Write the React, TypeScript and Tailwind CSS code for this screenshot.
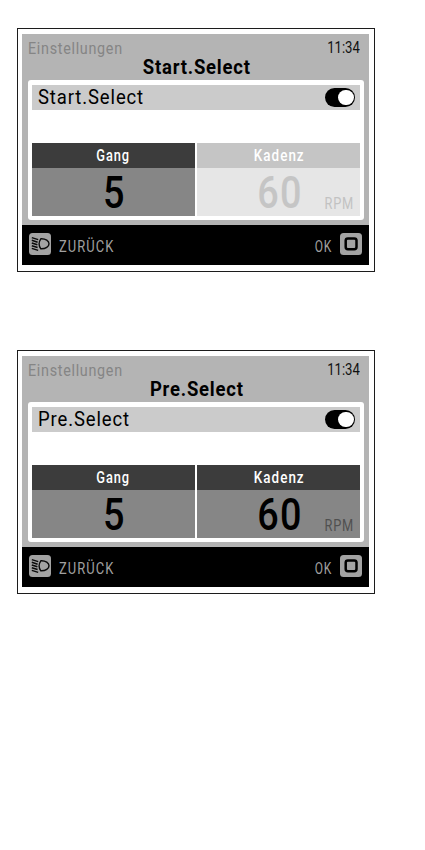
interface ScreenProps {
  title: string
  gear: string
  cadence: string
  cadenceActive: boolean
}

function LightIcon() {
  return (
    <svg width="22" height="22" viewBox="0 0 22 22" fill="none" stroke="#0a0a0a">
      <rect width="22" height="22" rx="3.5" fill="#a3a3a3" stroke="none" />
      <path
        d="M11.8 5.8C9.8 8.8 9.8 12.9 11.8 15.8C16.8 16 20 13.6 20 10.8C20 8 16.8 5.6 11.8 5.8Z"
        strokeWidth="1.4"
        strokeLinejoin="round"
      />
      <path
        d="M2.8 4.6L9.2 6.6M2.8 7.3L8.6 9.2M2.8 10L8.4 11.8M2.8 12.7L8.6 14.5M2.8 15.4L9.2 17.4"
        strokeWidth="1.5"
      />
    </svg>
  )
}

function SquareIcon() {
  return (
    <svg width="22" height="22" viewBox="0 0 22 22" fill="none">
      <rect width="22" height="22" rx="3.5" fill="#a3a3a3" />
      <rect x="5.7" y="5.4" width="10.8" height="10.8" rx="2.2" stroke="#000" strokeWidth="2.5" />
    </svg>
  )
}

function Toggle() {
  return (
    <div className="flex h-[19px] w-[30px] items-center justify-end rounded-full bg-black px-[1.5px]">
      <div className="size-[15.5px] rounded-full bg-white" />
    </div>
  )
}

function Screen({ title, gear, cadence, cadenceActive }: ScreenProps) {
  return (
    <section className="h-[244px] w-[358px] border border-[#1c1c1c] bg-white pt-[5px] pl-[4px]">
      <div className="flex h-[231px] w-[347px] flex-col bg-[#b4b4b4]">
        <header className="h-[46px] pt-[4px]">
          <div className="flex h-5 items-center justify-between pr-[9px] pl-[6px] leading-5">
            <span className="origin-left scale-x-[0.87] pt-[2px] text-[16.5px] tracking-[0.8px] text-[#858585]">
              Einstellungen
            </span>
            <span className="origin-right scale-x-[0.82] text-[16px] text-[#111]">11:34</span>
          </div>
          <h1 className="-mt-[3px] scale-x-[0.88] pl-[3px] text-center text-[21px] leading-6 font-bold tracking-[0.9px] text-black">
            {title}
          </h1>
        </header>

        <main className="mx-[6px] h-[140px] w-[336px] rounded-[3px] bg-white px-[4px] pt-[5px]">
          <div className="flex h-[25px] items-center justify-between bg-[#cbcbcb] pr-[5px] pl-[6px]">
            <span className="origin-left scale-x-[0.88] text-[21px] leading-[25px] tracking-[1px] text-black">
              {title}
            </span>
            <Toggle />
          </div>

          {/* Value tiles */}
          <div className="mt-[33px] grid grid-cols-2 gap-[2px]">
            <div className="bg-[#868686] text-center">
              <div className="h-[25px] bg-[#3c3c3c] text-[16px] leading-[25px] font-medium text-white">
                <span className="inline-block scale-x-[0.8] tracking-[1.2px]">Gang</span>
              </div>
              <div className="h-[48px] text-[45px] leading-[50px] font-medium text-black">
                <span className="inline-block scale-x-[0.84]">{gear}</span>
              </div>
            </div>
            <div className={cadenceActive ? 'bg-[#868686]' : 'bg-[#e6e6e6]'}>
              <div
                className={`h-[25px] pl-[2px] text-center text-[16px] leading-[25px] font-medium text-white ${
                  cadenceActive ? 'bg-[#3c3c3c]' : 'bg-[#c5c5c5]'
                }`}
              >
                <span className="inline-block scale-x-[0.84] tracking-[1.2px]">Kadenz</span>
              </div>
              <div className="grid h-[48px] grid-cols-[1fr_54px_1fr] items-center">
                <span
                  className={`col-start-2 scale-x-[0.84] pl-[1px] text-center text-[45px] leading-[50px] font-medium tracking-[1.5px] ${
                    cadenceActive ? 'text-black' : 'text-[#c5c5c5]'
                  }`}
                >
                  {cadence}
                </span>
                <span
                  className={`origin-right scale-x-[0.8] pt-[21px] pr-[8px] text-right text-[16px] leading-5 tracking-[1px] ${
                    cadenceActive ? 'text-[#505050]' : 'text-[#c2c2c2]'
                  }`}
                >
                  RPM
                </span>
              </div>
            </div>
          </div>
        </main>

        <footer className="mt-auto flex h-[40px] items-center bg-black px-[7px] pb-[2px] text-[16px] text-[#a0a0a0]">
          <LightIcon />
          <span className="ml-[8px] origin-left scale-x-[0.81] pt-[5px] tracking-[1.3px]">ZURÜCK</span>
          <span className="mr-[8px] ml-auto origin-right scale-x-[0.75] pt-[5px] tracking-[1px]">OK</span>
          <SquareIcon />
        </footer>
      </div>
    </section>
  )
}

export default function App() {
  return (
    <div className="flex h-[850px] w-[425px] flex-col gap-[78px] bg-white pt-[28px] pl-[17px] font-['Roboto',sans-serif]">
      <Screen title="Start.Select" gear="5" cadence="60" cadenceActive={false} />
      <Screen title="Pre.Select" gear="5" cadence="60" cadenceActive />
    </div>
  )
}
